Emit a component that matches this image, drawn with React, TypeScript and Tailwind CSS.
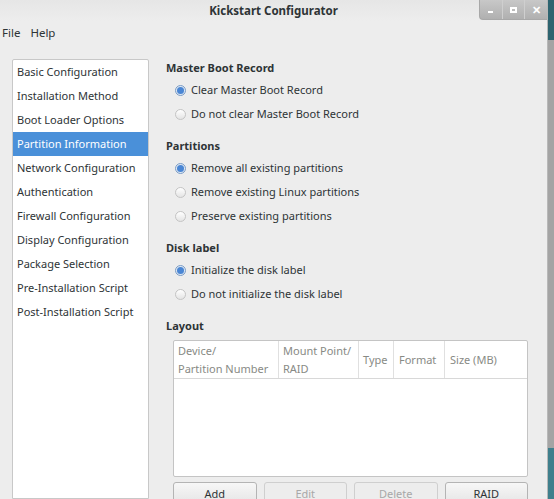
import React from 'react';

const navItems = [
  'Basic Configuration',
  'Installation Method',
  'Boot Loader Options',
  'Partition Information',
  'Network Configuration',
  'Authentication',
  'Firewall Configuration',
  'Display Configuration',
  'Package Selection',
  'Pre-Installation Script',
  'Post-Installation Script',
];

type Option = { label: string; checked?: boolean };

const groups: { title: string; options: Option[] }[] = [
  {
    title: 'Master Boot Record',
    options: [{ label: 'Clear Master Boot Record', checked: true }, { label: 'Do not clear Master Boot Record' }],
  },
  {
    title: 'Partitions',
    options: [
      { label: 'Remove all existing partitions', checked: true },
      { label: 'Remove existing Linux partitions' },
      { label: 'Preserve existing partitions' },
    ],
  },
  {
    title: 'Disk label',
    options: [{ label: 'Initialize the disk label', checked: true }, { label: 'Do not initialize the disk label' }],
  },
];

function Radio({ checked }: { checked?: boolean }) {
  return (
    <span
      className={
        checked
          ? 'w-[11px] h-[11px] rounded-full border border-[#7a9cc6] bg-[#dfe8f3] flex items-center justify-center shrink-0'
          : 'w-[11px] h-[11px] rounded-full border border-[#c4c4c4] bg-gradient-to-b from-white to-[#e4e4e4] shrink-0'
      }
    >
      {checked && <span className="w-[7px] h-[7px] rounded-full bg-[#4a86d4]" />}
    </span>
  );
}

export default function App() {
  return (
    <div
      className="w-[554px] h-[499px] overflow-hidden flex bg-[#a4a4a4] text-[11px] text-[#2e3436]"
      style={{ fontFamily: '"Noto Sans", "Open Sans", sans-serif' }}
    >
      <div className="w-[548px] h-full flex flex-col bg-[#ededed] border-r border-[#b8b8b8] shrink-0">
        {/* title bar */}
        <div className="h-[21px] shrink-0 relative flex items-center justify-center bg-gradient-to-b from-[#e6e6e6] to-[#ededed]">
          <span className="font-bold text-[11.5px] text-[#2e3436]">Kickstart Configurator</span>
          <div className="absolute right-0 top-0 h-[20px] w-[68px] flex rounded-bl-[4px] border-l border-b border-[#a8a8a8] bg-gradient-to-b from-[#c8c8c8] to-[#b0b0b0]">
            <div className="flex-1 flex items-end justify-center pb-[6px] border-r border-[#cfcfcf]">
              <span className="w-[5px] h-[2px] bg-white" />
            </div>
            <div className="flex-1 flex items-center justify-center border-r border-[#cfcfcf]">
              <span className="w-[7px] h-[6px] border-2 border-white" />
            </div>
            <div className="flex-1 flex items-center justify-center text-white font-bold text-[11px] leading-none">✕</div>
          </div>
        </div>
        {/* menu */}
        <div className="h-[23px] shrink-0 flex items-center gap-[10px] pl-[2px] text-[11.5px]">
          <span>File</span>
          <span>Help</span>
        </div>
        <div className="flex-1 min-h-0 overflow-hidden flex pt-[15px] pl-[12px]">
          {/* nav */}
          <div className="w-[137px] bg-white border border-[#c8c8c8] rounded-t-[2px] shrink-0">
            {navItems.map((item) => (
              <div
                key={item}
                className={
                  item === 'Partition Information'
                    ? 'h-[24px] flex items-center pl-[4px] bg-[#4a90d9] text-white'
                    : 'h-[24px] flex items-center pl-[4px]'
                }
              >
                {item}
              </div>
            ))}
          </div>
          {/* content */}
          <div className="flex-1 pl-[17px] pr-[19px] -mt-[1px]">
            {groups.map((g) => (
              <div key={g.title} className="mb-[10px]">
                <div className="font-bold h-[20px] flex items-center">{g.title}</div>
                {g.options.map((o) => (
                  <div key={o.label} className="h-[24px] flex items-center gap-[5px] pl-[9px]">
                    <Radio checked={o.checked} />
                    <span>{o.label}</span>
                  </div>
                ))}
              </div>
            ))}
            <div className="font-bold h-[20px] flex items-center">Layout</div>
            <div className="ml-[7px] h-[137px] bg-white border border-[#c4c4c4] rounded-[2px] mt-[4px]">
              <div className="h-[38px] flex border-b border-[#d8d8d8] text-[#888a85] leading-[18px]">
                <div className="w-[105px] px-[4px] flex flex-col justify-center border-r border-[#e0e0e0]">
                  <span>Device/</span>
                  <span>Partition Number</span>
                </div>
                <div className="w-[80px] px-[4px] flex flex-col justify-center border-r border-[#e0e0e0]">
                  <span>Mount Point/</span>
                  <span>RAID</span>
                </div>
                <div className="w-[35px] px-[4px] flex items-center border-r border-[#e0e0e0]">Type</div>
                <div className="w-[51px] px-[5px] flex items-center border-r border-[#e0e0e0]">Format</div>
                <div className="flex-1 px-[5px] flex items-center">Size (MB)</div>
              </div>
            </div>
            <div className="ml-[7px] mt-[5px] flex gap-[7px]">
              <button className="flex-1 h-[24px] rounded-[3px] border border-[#b4b4b4] bg-gradient-to-b from-[#f7f7f7] to-[#e4e4e4]">Add</button>
              <button className="flex-1 h-[24px] rounded-[3px] border border-[#cfcfcf] bg-[#ededed] text-[#a8a8a8]">Edit</button>
              <button className="flex-1 h-[24px] rounded-[3px] border border-[#cfcfcf] bg-[#ededed] text-[#a8a8a8]">Delete</button>
              <button className="flex-1 h-[24px] rounded-[3px] border border-[#b4b4b4] bg-gradient-to-b from-[#f7f7f7] to-[#e4e4e4]">RAID</button>
            </div>
          </div>
        </div>
      </div>
      <div className="flex-1 flex flex-col">
        <div className="h-[40px] bg-[#2e6470]" />
        <div className="flex-1 bg-[#a4a4a4]" />
        <div className="h-[51px] bg-[#3f7f8c]" />
      </div>
    </div>
  );
}
